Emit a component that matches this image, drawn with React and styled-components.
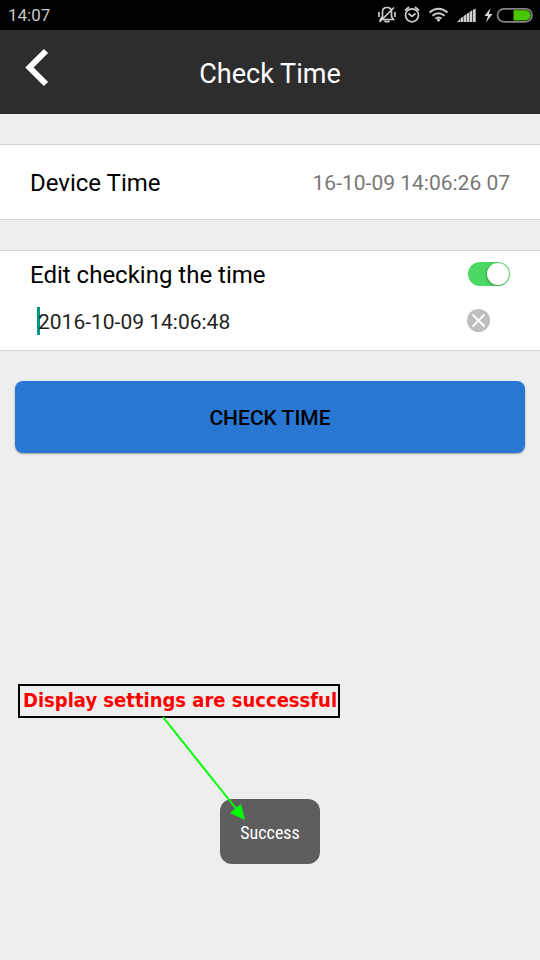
import React, { useState } from "react";
import styled, { createGlobalStyle } from "styled-components";

const GlobalStyle = createGlobalStyle`
  * { box-sizing: border-box; }
  body {
    margin: 0;
    background: #eeeeee;
    font-family: Roboto, "Liberation Sans", sans-serif;
  }
  button, input { font: inherit; }
`;

const Screen = styled.div`
  position: relative;
  min-height: 100vh;
`;

const StatusBar = styled.div`
  display: flex;
  align-items: center;
  justify-content: space-between;
  height: 30px;
  padding: 0 6px 0 8px;
  background: #000;
  color: #c8c8c8;
  font-size: 17px;
`;

const StatusIcons = styled.div`
  display: flex;
  align-items: center;

  svg { display: block; }
`;

const Header = styled.header`
  display: grid;
  grid-template-columns: 72px 1fr 72px;
  height: 84px;
  background: #2d2d2d;
  color: #fff;
`;

const BackButton = styled.button`
  display: flex;
  align-items: flex-start;
  padding: 18px 0 0 24px;
  border: 0;
  background: none;
  color: inherit;
`;

const Title = styled.h1`
  margin: 0;
  padding-top: 4px;
  align-self: center;
  font-size: 27px;
  line-height: 32px;
  font-weight: 400;
  text-align: center;
`;

const Content = styled.main`
  display: flex;
  flex-direction: column;
  gap: 30px;
  padding-top: 30px;
`;

const Card = styled.section`
  padding: ${(p) => p.$padding};
  background: #fff;
  border-top: 1px solid #d6d6d6;
  border-bottom: 1px solid #d6d6d6;
`;

const Row = styled.div`
  display: flex;
  align-items: center;
  justify-content: space-between;
  min-height: ${(p) => p.$height};
`;

const Label = styled.label`
  padding-top: 2px;
  font-size: 24px;
  line-height: 32px;
  color: #000;
`;

const DeviceValue = styled.output`
  padding-top: 2px;
  font-size: 21px;
  line-height: 28px;
  color: #777;
`;

const Switch = styled.input`
  appearance: none;
  width: 42px;
  height: 24px;
  margin: 0;
  border-radius: 12px;
  background: ${(p) => (p.checked ? "#4bd763" : "#cccccc")};

  &::before {
    content: "";
    display: block;
    width: 22px;
    height: 22px;
    margin: 1px;
    margin-left: ${(p) => (p.checked ? "19px" : "1px")};
    border-radius: 50%;
    background: #fff;
    box-shadow: -1px 1px 2px rgba(0, 0, 0, 0.25);
  }
`;

const Caret = styled.span`
  width: 3px;
  height: 28px;
  margin-left: 7px;
  margin-right: -2px;
  background: #009688;
`;

const TimeInput = styled.input`
  flex: 1;
  min-width: 0;
  padding: 2px 0 0;
  border: 0;
  outline: 0;
  background: none;
  color: #1f1f1f;
  font-size: 21px;
  line-height: 28px;
`;

const ClearButton = styled.button`
  width: 24px;
  height: 24px;
  margin-right: 20px;
  padding: 0;
  border: 0;
  background: none;

  svg { display: block; }
`;

const CheckButton = styled.button`
  height: 72px;
  margin: 0 15px;
  padding: 2px 0 0;
  border: 0;
  border-radius: 8px;
  background: #2777d3;
  box-shadow: 0 1px 2px rgba(0, 0, 0, 0.35);
  color: #000;
  font-size: 21px;
  font-weight: 500;
`;

const Note = styled.div`
  position: absolute;
  left: 18px;
  top: 684px;
  height: 34px;
  width: 322px;
  padding-left: 3px;
  border: 2px solid #000;
  color: #f00;
  font-family: "DejaVu Sans Condensed", "DejaVu Sans", sans-serif;
  font-size: 20px;
  line-height: 28px;
  font-weight: 700;
  white-space: nowrap;
`;

const Toast = styled.div`
  position: absolute;
  left: 50%;
  top: 799px;
  transform: translateX(-50%);
  min-width: 100px;
  padding: 21px 20px 19px;
  border-radius: 12px;
  background: #5e5e5e;
  color: #fff;
  font-family: "Roboto Condensed", Roboto, sans-serif;
  font-size: 18px;
  line-height: 25px;
  text-align: center;
`;

const Arrow = styled.svg`
  position: absolute;
  left: 160px;
  top: 714px;
  pointer-events: none;
`;

const StatusGlyphs = () => (
  <svg width="164" height="30" viewBox="370 0 164 30" fill="none" stroke="#cccccc" strokeWidth="1.7" aria-hidden="true">
    <path d="M380.500 19.500h13l-2-3v-4.500c0-3-2-4.500-4.500-4.500s-4.500 1.500-4.500 4.500v4.500zM384.500 21q2.500 1.500 5 0M379.500 22L394 7.500" />
    <path d="M379 12v5M395 12v5" />
    <circle cx="412" cy="15.300" r="6.500" />
    <path d="M408.500 13.500l3.500 3 3.500-3M405 10.500l4-3.500M419 10.500l-4-3.500" />
    <path d="M429.500 12.500q9-7.500 18 0M432.500 15.800q6-5 12 0M435.500 18.700q3-2.500 6 0" strokeWidth="2" />
    <circle cx="438.500" cy="20.200" r="1.400" fill="#d5d5d5" stroke="none" />
    <path d="M457 22l3-3v3zM460.500 22v-4l2.500-1v5zM463.500 22v-6l2.500-1.500v7.500zM466.500 22v-8l2.500-1.500v9.500zM469.500 22V12l2.500-1.500V22zM472.700 22V10l3-1.500V22z" fill="#d0d0d0" stroke="none" />
    <path d="M490.500 8l-6 8h3.500l-2 6.500 6.500-8.500h-3.500z" fill="#d5d5d5" stroke="none" />
    <rect x="497.500" y="8.800" width="34.500" height="13" rx="6.500" stroke="#858585" />
    <path d="M513.500 10.200H525.500a5 5 0 0 1 0 10.200h-12z" fill="#49c500" stroke="none" />
  </svg>
);

export default function App() {
  const [editing, setEditing] = useState(true);
  const [time, setTime] = useState("2016-10-09 14:06:48");

  return (
    <Screen>
      <GlobalStyle />
      <StatusBar>
        <span>14:07</span>
        <StatusIcons><StatusGlyphs /></StatusIcons>
      </StatusBar>
      <Header>
        <BackButton aria-label="Back">
          <svg width="26" height="40" viewBox="0 0 26 40" fill="none" stroke="#fff" strokeWidth="6">
            <path d="M22 3L5.500 19.500 22 36" />
          </svg>
        </BackButton>
        <Title>Check Time</Title>
      </Header>
      <Content>
        <Card $padding="0 30px">
          <Row $height="74px">
            <Label htmlFor="device-time">Device Time</Label>
            <DeviceValue id="device-time">16-10-09 14:06:26 07</DeviceValue>
          </Row>
        </Card>
        <Card $padding="0 30px 5px">
          <Row $height="46px">
            <Label htmlFor="edit-time">Edit checking the time</Label>
            <Switch
              id="edit-time"
              type="checkbox"
              role="switch"
              checked={editing}
              onChange={(e) => setEditing(e.target.checked)}
            />
          </Row>
          <Row $height="48px">
            <Caret />
            <TimeInput aria-label="Checking time" value={time} onChange={(e) => setTime(e.target.value)} />
            <ClearButton aria-label="Clear time" onClick={() => setTime("")}>
              <svg width="24" height="24" viewBox="0 0 24 24">
                <circle cx="12.500" cy="11.500" r="11.500" fill="#bfbfbf" />
                <path d="M6.500 5.500l12 12M18.500 5.500l-12 12" stroke="#fff" strokeWidth="1.800" />
              </svg>
            </ClearButton>
          </Row>
        </Card>
        <CheckButton>CHECK TIME</CheckButton>
      </Content>
      <Note>Display settings are successful</Note>
      <Toast role="status">Success</Toast>
      <Arrow width="90" height="110" viewBox="160 714 90 110" aria-hidden="true">
        <path d="M163 717L238 811" stroke="#0f0" strokeWidth="2" />
        <path d="M245 820L230 813L241 804z" fill="#0f0" />
      </Arrow>
    </Screen>
  );
}
